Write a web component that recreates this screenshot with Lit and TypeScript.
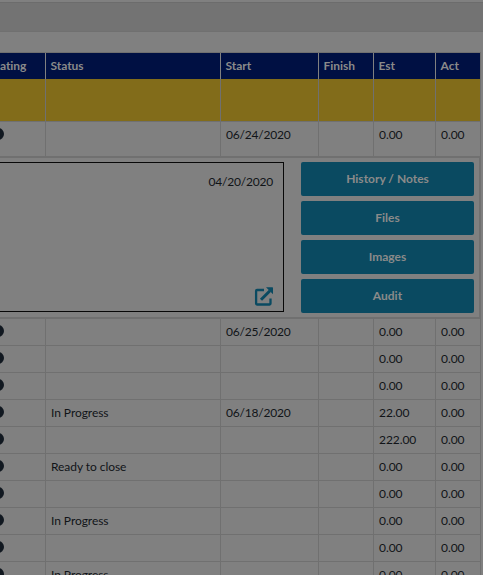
import { LitElement, html, css } from "lit";
import { customElement } from "lit/decorators.js";

interface Task {
  status?: string;
  start?: string;
  est: string;
}

const TASKS: Task[] = [
  { start: "06/25/2020", est: "0.00" },
  { est: "0.00" },
  { est: "0.00" },
  { status: "In Progress", start: "06/18/2020", est: "22.00" },
  { est: "222.00" },
  { status: "Ready to close", est: "0.00" },
  { est: "0.00" },
  { status: "In Progress", est: "0.00" },
  { est: "0.00" },
  { status: "In Progress", est: "0.00" },
];

@customElement("app-root")
export class AppRoot extends LitElement {
  static styles = css`
    :host {
      display: block;
      width: 483px;
      height: 575px;
      overflow: hidden;
      background: #808080;
      color: #111418;
      font: 12px/16px Lato, "Liberation Sans", sans-serif;
      letter-spacing: -0.06px;
    }
    * { box-sizing: border-box; }
    .band {
      height: 30px;
      margin: 2px 0 20px;
      background: #737373;
      border-top: 1px solid #6c6c6c;
      border-bottom: 1px solid #707070;
    }
    .table { width: 481px; border-top: 1px solid #707070; }
    .row {
      display: grid;
      grid-template-columns: 46px 175px 98px 55px 62px 45px;
      height: 27px;
    }
    .cell {
      padding: 5px 0 0 5px;
      border-right: 1px solid #707070;
      border-bottom: 1px solid #707070;
      white-space: nowrap;
      overflow: hidden;
    }
    .date { letter-spacing: -0.2px; }
    .head { height: 26px; background: #001043; color: #8a8a8a; font-weight: 700; }
    .head .cell { padding-left: 4.6px; border-bottom: 0; border-right-color: #808080; }
    .head .cell:last-child { border-right-color: #707070; }
    .head .cell:first-child { padding-left: 0; }
    .group { height: 43px; }
    .group .cell { background: #826c1a; background-clip: padding-box; }
    .open { height: 34px; }
    .open .cell { border-bottom: 0; }
    .rating { padding: 6px 0 0; }
    .dot {
      display: block;
      width: 12px;
      height: 12px;
      margin-left: -8px;
      border-radius: 50%;
      background: #111820;
    }
    .detail {
      display: flex;
      height: 163px;
      padding: 4px 5px 0 0;
      border: 2px solid #707070;
      border-left: 0;
    }
    .note {
      display: flex;
      flex-direction: column;
      justify-content: space-between;
      align-items: flex-end;
      width: 284px;
      height: 150px;
      padding: 11px 10px 5px;
      border: 1px solid #080808;
      border-left: 0;
    }
    .popout { display: block; width: 19px; height: 19px; }
    .actions {
      display: flex;
      flex-direction: column;
      gap: 5px;
      margin-left: 17px;
      width: 173px;
    }
    .button {
      width: 173px;
      height: 34px;
      padding: 0;
      border: 0;
      border-radius: 2px;
      background: #0a4a61;
      color: #8a8a8a;
      font: inherit;
      font-weight: 700;
    }
  `;

  private cells(t: Task) {
    return html`
      <div class="cell rating"><span class="dot"></span></div>
      <div class="cell">${t.status}</div>
      <div class="cell date">${t.start}</div>
      <div class="cell"></div>
      <div class="cell">${t.est}</div>
      <div class="cell">0.00</div>
    `;
  }

  render() {
    return html`
      <div class="band"></div>
      <div class="table">
        <div class="row head">
          ${["ating", "Status", "Start", "Finish", "Est", "Act"].map(
            (h) => html`<div class="cell">${h}</div>`
          )}
        </div>
        <div class="row group">
          ${[0, 1, 2, 3, 4, 5].map(() => html`<div class="cell"></div>`)}
        </div>
        <div class="row open">${this.cells({ start: "06/24/2020", est: "0.00" })}</div>
        <div class="detail">
          <div class="note">
            <span class="date">04/20/2020</span>
            <svg class="popout" viewBox="0 0 19 19" fill="none" stroke="#0a4a61">
              <path d="M10 3H3Q2.1 3 2.1 3.9V16.6Q2.1 17.5 3 17.5H15.6Q16.5 17.5 16.5 16.6V11.5" stroke-width="2.3" />
              <path d="M7 12.8L16 3.8" stroke-width="3" />
              <path d="M12 0.3H18.4Q19 0.3 19 0.9V7.3Z" fill="#0a4a61" stroke="none" />
            </svg>
          </div>
          <div class="actions">
            ${["History / Notes", "Files", "Images", "Audit"].map(
              (b) => html`<button class="button">${b}</button>`
            )}
          </div>
        </div>
        ${TASKS.map((t) => html`<div class="row">${this.cells(t)}</div>`)}
      </div>
    `;
  }
}
